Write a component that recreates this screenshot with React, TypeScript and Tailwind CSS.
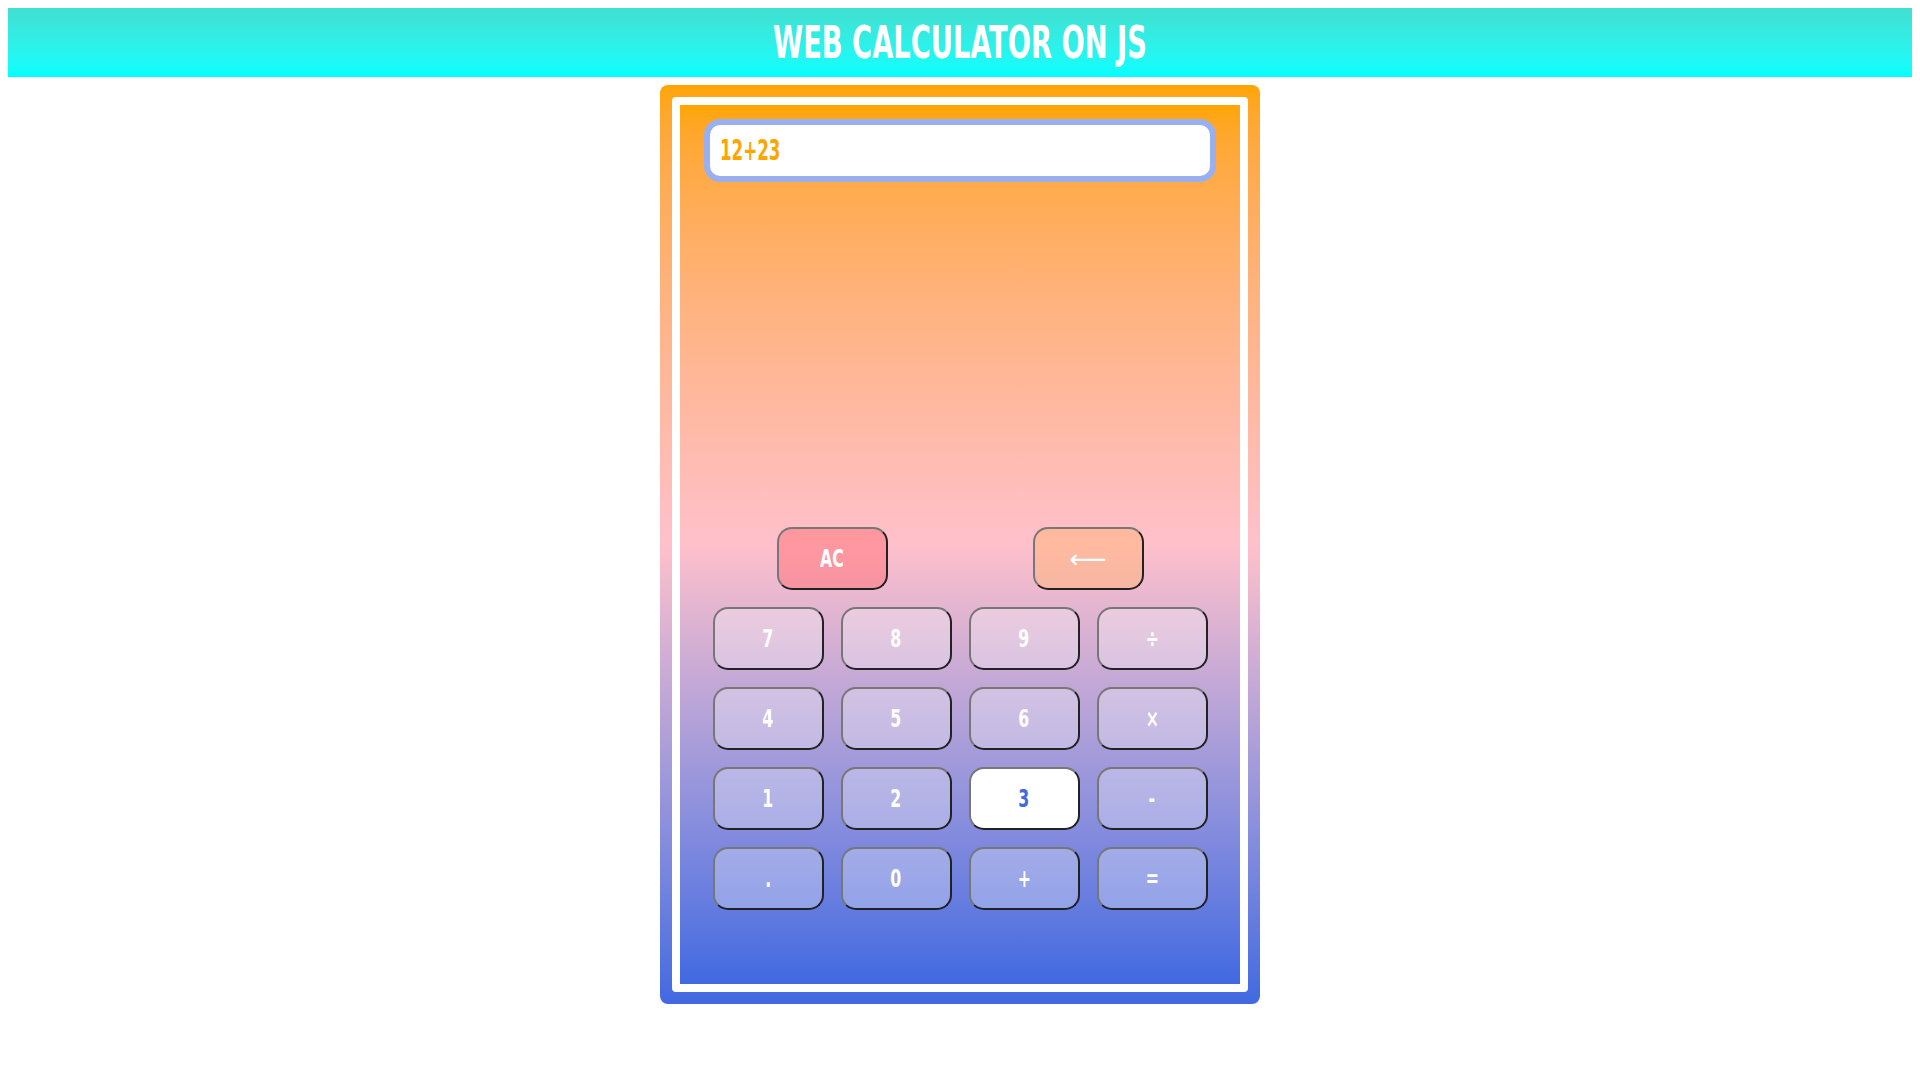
import React, { useState } from 'react'

const font = { fontFamily: '"Liberation Sans Narrow", "DejaVu Sans Condensed", "Liberation Sans", sans-serif' }

const rows = [
    ['7', '8', '9', '÷'],
    ['4', '5', '6', '×'],
    ['1', '2', '3', '-'],
    ['.', '0', '+', '='],
]

const keyBase = 'flex h-[63px] w-[111px] items-center justify-center rounded-[15px] border-2 border-t-[#777] border-l-[#777] border-b-[#222] border-r-[#222] text-[25px] font-bold'

function Key({ label, active, onPress }: { label: string, active?: boolean, onPress: (k: string) => void }) {
    return (
        <button
            type="button"
            onClick={() => onPress(label)}
            className={keyBase + ' ' + (active ? 'bg-white text-[#4169e1]' : 'bg-white/30 text-white')}
        >
            <span className="inline-block scale-x-[0.7]">{label}</span>
        </button>
    )
}

export default function App() {
    const [expr, setExpr] = useState('12+23')

    const press = (k: string) => {
        if (k === '=') {
            try {
                const safe = expr.replace(/×/g, '*').replace(/÷/g, '/')
                setExpr(String(Function('return (' + safe + ')')()))
            } catch {
                setExpr('Error')
            }
            return
        }
        setExpr(e => e + k)
    }

    return (
        <div className="min-h-screen bg-white p-2" style={font}>
            {/* Header */}
            <header className="flex h-[69px] items-center justify-center bg-gradient-to-b from-[#40e0d0] to-[#00ffff]">
                <h1 className="scale-x-[0.69] text-[44px] font-bold uppercase leading-none whitespace-nowrap text-white">Web Calculator on JS</h1>
            </header>

            {/* Calculator */}
            <div className="mx-auto mt-2 h-[919px] w-[600px] rounded-[8px] bg-gradient-to-b from-[#ffa500] via-[#ffc0cb] to-[#4169e1] p-3">
                <div className="flex h-full flex-col rounded-[4px] border-8 border-white bg-gradient-to-b from-[#ffa500] via-[#ffc0cb] to-[#4169e1]">
                    <div className="mx-6 mt-[14px] flex h-[63px] items-center rounded-[16px] border-[6px] border-[#9aaff0] bg-white px-[10px]">
                        <span className="inline-block origin-left scale-x-[0.64] text-[29px] font-bold leading-none text-[#ffa500]">{expr}</span>
                    </div>

                    <div className="mt-auto mb-[74px] grid grid-cols-[repeat(4,111px)] justify-center gap-x-[17px] gap-y-[17px]">
                        <div className="col-span-2 flex justify-center">
                            <button
                                type="button"
                                onClick={() => setExpr('')}
                                className={keyBase + ' bg-[#ff6e75]/50 text-white'}
                            >
                                <span className="inline-block scale-x-[0.7]">AC</span>
                            </button>
                        </div>
                        <div className="col-span-2 flex justify-center">
                            <button
                                type="button"
                                onClick={() => setExpr(e => e.slice(0, -1))}
                                className={keyBase + ' bg-[#ffb475]/50 text-white'}
                            >
                                <span className="text-[26px] font-normal leading-none" style={{ fontFamily: '"DejaVu Sans", sans-serif' }}>⟵</span>
                            </button>
                        </div>
                        {rows.flat().map(k => (
                            <Key key={k} label={k} active={k === '3'} onPress={press} />
                        ))}
                    </div>
                </div>
            </div>
        </div>
    )
}
